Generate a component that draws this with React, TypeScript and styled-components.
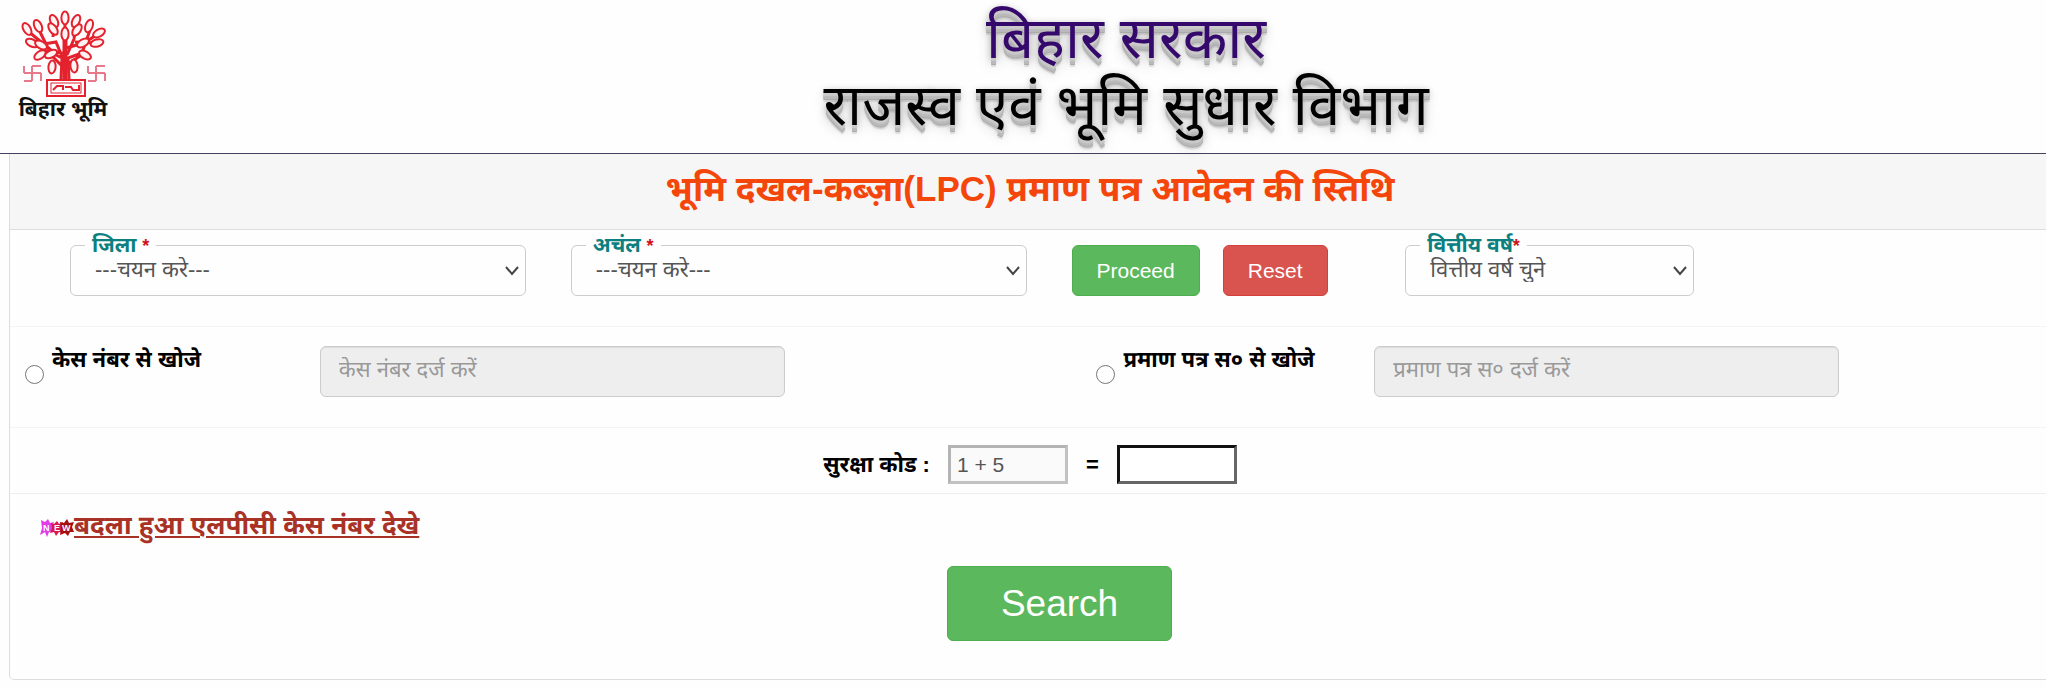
import React from "react";
import styled, { createGlobalStyle } from "styled-components";

const GlobalStyle = createGlobalStyle`
  *, *::before, *::after { box-sizing: border-box; }
  body {
    margin: 0;
    background: #fefefe;
    color: #000;
    font-family: "Liberation Sans", "Nirmala UI", "Noto Sans Devanagari", "Noto Sans", sans-serif;
    font-size: 22px;
    line-height: 30px;
  }
  input, select, button { font-family: inherit; }
`;

const Page = styled.div`
  overflow-x: clip;
`;

const Header = styled.header`
  display: flex;
  height: 154px;
  border-bottom: 1px solid #45425f;
`;

const Brand = styled.a`
  flex: 0 0 206px;
  padding: 10px 0 0 18px;
  color: #111;
  text-decoration: none;
`;

const BrandName = styled.span`
  display: flex;
  justify-content: center;
  width: 90px;
  white-space: nowrap;
  font-size: 21px;
  line-height: 22px;
  font-weight: 700;
`;

const Emblem = styled.svg`
  display: block;
  width: 90px;
  height: 88px;
`;

const Titles = styled.div`
  flex: 1;
  padding-top: 4px;
  text-align: center;
`;

const Title = styled.h1<{ $color: string }>`
  margin: 0;
  color: ${(p) => p.$color};
  font-size: 58px;
  line-height: 67px;
  font-weight: 400;
  text-shadow: 0 1px 0 #ccc, 0 3px 0 #c9c9c9, 0 4px 0 #bbb, 0 6px 0 #b9b9b9,
    0 7px 0 #aaa, 0 9px 1px rgba(0, 0, 0, 0.1), 0 0 7px rgba(0, 0, 0, 0.1),
    0 4px 7px rgba(0, 0, 0, 0.2), 0 7px 14px rgba(0, 0, 0, 0.2);
`;

const Panel = styled.form`
  margin: 0 -5px 0 9px;
  border: 1px solid #ddd;
  border-top: 0;
  border-radius: 0 0 5px 5px;
`;

const PanelTitle = styled.h2`
  margin: 0;
  padding: 15px 0 20px;
  background: #f6f6f6;
  border-bottom: 1px solid #ddd;
  color: #f4460a;
  text-align: center;
  font-size: 35px;
  line-height: 40px;
  font-weight: 700;
`;

const FilterRow = styled.div`
  display: grid;
  grid-template-columns: repeat(12, 1fr);
  column-gap: 45px;
  padding: 15px 22px 30px 60px;
  border-bottom: 1px solid #f4f4f4;
`;

const Field = styled.div<{ $span: number }>`
  position: relative;
  grid-column: span ${(p) => p.$span};
`;

const FieldLabel = styled.label`
  position: absolute;
  top: -15px;
  left: 15px;
  padding: 0 7px;
  background: linear-gradient(#fefefe, #fefefe) center / 100% 6px no-repeat;
  color: #0c8080;
  font-weight: 700;
  font-size: 21px;
  line-height: 30px;
  white-space: nowrap;
`;

const Required = styled.span`
  color: #d01020;
  font-size: 18px;
`;

const Select = styled.select`
  display: block;
  width: 100%;
  height: 51px;
  padding: 0 36px 2px 24px;
  appearance: none;
  background: #fefefe;
  border: 1px solid #ccc;
  border-radius: 6px;
  color: #555;
  font-size: 22px;
`;

const Chevron = styled.svg`
  position: absolute;
  top: 20px;
  right: 6px;
  width: 16px;
  height: 12px;
  pointer-events: none;
`;

const Actions = styled.div`
  grid-column: span 2;
  display: flex;
  gap: 23px;
`;

const Button = styled.button<{ $tone: "green" | "red"; $large?: boolean }>`
  height: ${(p) => (p.$large ? 75 : 51)}px;
  padding: 0 ${(p) => (p.$large ? 53 : 24)}px;
  background: ${(p) => (p.$tone === "green" ? "#5cb85c" : "#d9534f")};
  border: 1px solid ${(p) => (p.$tone === "green" ? "#4cae4c" : "#d43f3a")};
  border-radius: 6px;
  color: #fff;
  font-size: ${(p) => (p.$large ? 37 : 21)}px;
`;

const SearchRow = styled.div`
  display: grid;
  grid-template-columns: 295fr 465fr 312fr 278fr 465fr 211fr;
  padding: 19px 0 30px 15px;
  border-bottom: 1px solid #f4f4f4;
`;

const Choice = styled.div<{ $column: number }>`
  grid-column: ${(p) => p.$column};
  display: flex;
  align-items: flex-start;
  gap: 8px;
`;

const Radio = styled.input`
  width: 19px;
  height: 19px;
  margin: 19px 0 0;
`;

const ChoiceLabel = styled.label`
  line-height: 28px;
  font-weight: 700;
  white-space: nowrap;
`;

const TextInput = styled.input<{ $column: number }>`
  grid-column: ${(p) => p.$column};
  min-width: 0;
  height: 51px;
  padding: 0 18px 4px;
  background: #eee;
  border: 1px solid #ccc;
  border-radius: 6px;
  box-shadow: inset 0 1px 1px rgba(0, 0, 0, 0.08);
  font-size: 22px;
  &::placeholder { color: #999; opacity: 1; }
`;

const CaptchaRow = styled.div`
  display: flex;
  justify-content: center;
  align-items: center;
  gap: 18px;
  padding: 17px 0 9px;
  border-bottom: 1px solid #eee;
  font-weight: 700;
`;

const CaptchaInput = styled.input`
  width: 120px;
  height: 39px;
  padding: 0 6px;
  border: 3px solid;
  border-color: #111 #666 #666 #111;
  background: #fff;
  font-size: 21px;
  &:disabled {
    background: #fafafa;
    border-color: #b4b4b4 #c2c2c2 #c2c2c2 #b4b4b4;
    color: #555;
  }
`;

const Notice = styled.div`
  display: flex;
  align-items: center;
  padding: 12px 0 0 30px;
`;

const NewBadge = styled.svg`
  width: 34px;
  height: 20px;
  margin-top: 6px;
`;

const NoticeLink = styled.a`
  color: #a93226;
  font-size: 26px;
  line-height: 38px;
  font-weight: 700;
  text-decoration: underline;
`;

const Submit = styled.div`
  display: flex;
  justify-content: center;
  padding: 22px 0 38px 59px;
`;

const leaves: [number, number, number][] = [
  [47, 8, 0], [36, 11, -25], [58, 11, 25], [20, 16, -25], [9, 19, -30],
  [71, 16, 20], [81, 23, 60], [14, 33, -65], [35, 19, -35], [59, 20, 35],
  [23, 35, -60], [79, 33, 75], [65, 33, 60], [22, 45, 55], [33, 44, 65],
  [67, 45, -60], [34, 57, 5], [56, 56, -5], [47, 24, 0],
];

function Logo() {
  return (
    <Emblem viewBox="0 0 90 88" fill="none" stroke="#e4222e" aria-hidden="true">
      <path strokeWidth="5" d="M47 30V69" />
      <path strokeWidth="3" d="M43 69L44 48L32 42L22 22M51 69L50 48L64 43L72 20M45 49L38 32L20 35M49 45L56 29L58 14M47 34V12M48 38L66 33L80 24M45 43L28 41L15 33M35 27L36 15M50 54L65 44M44 56L34 46L23 45M57 32L79 33M33 40L11 22" />
      <g strokeWidth="2" fill="#fff4f4">
        {leaves.map(([x, y, r]) => (
          <ellipse key={`${x}-${y}`} cx={x} cy={y} rx="3.6" ry="6.5" transform={`rotate(${r} ${x} ${y})`} />
        ))}
      </g>
      <rect x="29" y="70" width="38" height="16" strokeWidth="2" />
      <rect x="33" y="73" width="30" height="10" strokeWidth="1" />
      <path strokeWidth="2" d="M35 80L39 76H45V80M47 77H53L55 80H61V75" />
      <g stroke="#e8788a" strokeWidth="2">
        <path d="M14 56V71M6 63H23M14 56H23M14 71H6M6 56V63M23 63V71" />
        <path d="M78 56V71M70 63H87M78 56H87M78 71H70M70 56V63M87 63V71" />
      </g>
    </Emblem>
  );
}

type SelectFieldProps = { id: string; label: string; option: string; span: number };

function SelectField({ id, label, option, span }: SelectFieldProps) {
  return (
    <Field $span={span}>
      <Select id={id}>
        <option>{option}</option>
      </Select>
      <FieldLabel htmlFor={id}>
        {label}
        <Required>*</Required>
      </FieldLabel>
      <Chevron viewBox="0 0 16 12" fill="none" stroke="#444" strokeWidth="2" aria-hidden="true">
        <path d="M2 2L8 9L14 2" />
      </Chevron>
    </Field>
  );
}

export default function App() {
  return (
    <Page>
      <GlobalStyle />
      <Header>
        <Brand href="#">
          <Logo />
          <BrandName>बिहार भूमि</BrandName>
        </Brand>
        <Titles>
          <Title $color="#35086b">बिहार सरकार</Title>
          <Title $color="#000">राजस्व एवं भूमि सुधार विभाग</Title>
        </Titles>
      </Header>
      <Panel onSubmit={(e) => e.preventDefault()}>
        <PanelTitle>भूमि दखल-कब्ज़ा(LPC) प्रमाण पत्र आवेदन की स्तिथि</PanelTitle>
        <FilterRow>
          <SelectField id="district" label="जिला " option="---चयन करे---" span={3} />
          <SelectField id="circle" label="अचंल " option="---चयन करे---" span={3} />
          <Actions>
            <Button type="button" $tone="green">Proceed</Button>
            <Button type="reset" $tone="red">Reset</Button>
          </Actions>
          <SelectField id="year" label="वित्तीय वर्ष" option="वित्तीय वर्ष चुने" span={2} />
        </FilterRow>
        <SearchRow>
          <Choice $column={1}>
            <Radio type="radio" name="mode" id="by-case" />
            <ChoiceLabel htmlFor="by-case">केस नंबर से खोजे</ChoiceLabel>
          </Choice>
          <TextInput $column={2} disabled placeholder="केस नंबर दर्ज करें" aria-label="केस नंबर" />
          <Choice $column={4}>
            <Radio type="radio" name="mode" id="by-certificate" />
            <ChoiceLabel htmlFor="by-certificate">प्रमाण पत्र स० से खोजे</ChoiceLabel>
          </Choice>
          <TextInput $column={5} disabled placeholder="प्रमाण पत्र स० दर्ज करें" aria-label="प्रमाण पत्र स०" />
        </SearchRow>
        <CaptchaRow>
          <label htmlFor="captcha">सुरक्षा कोड :</label>
          <CaptchaInput disabled defaultValue="1 + 5" aria-label="सुरक्षा कोड" />
          <span>=</span>
          <CaptchaInput id="captcha" />
        </CaptchaRow>
        <Notice>
          <NewBadge viewBox="0 0 34 20" aria-hidden="true">
            <path fill="#e23be8" d="M1 2L5 4L8 1L10 5L14 4L12 9L14 13L9 14L7 19L5 14L0 17L2 10Z" />
            <path fill="#d81b4a" d="M11 5L14 6L17 3L19 6L23 4L22 10L24 15L19 14L16 18L14 14L10 15L12 10Z" />
            <path fill="#a80d12" d="M20 4L24 5L27 1L29 5L34 4L32 9L34 14L30 14L28 18L25 15L20 17L21 10Z" />
            <g fill="#fff" fontSize="9" fontWeight="700" fontFamily="Liberation Sans, sans-serif">
              <text x="3" y="13">N</text>
              <text x="14" y="13">E</text>
              <text x="22" y="13">W</text>
            </g>
          </NewBadge>
          <NoticeLink href="#">बदला हुआ एलपीसी केस नंबर देखे</NoticeLink>
        </Notice>
        <Submit>
          <Button type="submit" $tone="green" $large>Search</Button>
        </Submit>
      </Panel>
    </Page>
  );
}
